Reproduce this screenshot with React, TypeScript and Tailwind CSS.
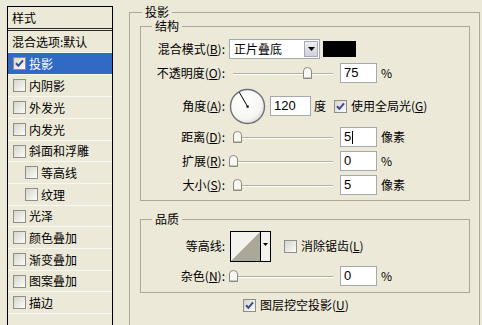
const cjk = "font-['Noto_Sans_CJK_SC',sans-serif]";

const styles = [
  { name: "混合选项:默认", h: "h-[22px]", kind: "plain" },
  { name: "投影", h: "h-[22px]", kind: "main", checked: true, active: true },
  { name: "内阴影", h: "h-[22px]", kind: "main" },
  { name: "外发光", h: "h-[22px]", kind: "main" },
  { name: "内发光", h: "h-[22px]", kind: "main" },
  { name: "斜面和浮雕", h: "h-[21px]", kind: "main" },
  { name: "等高线", h: "h-[22px]", kind: "sub" },
  { name: "纹理", h: "h-[22px]", kind: "sub" },
  { name: "光泽", h: "h-[21px]", kind: "main" },
  { name: "颜色叠加", h: "h-[22px]", kind: "main" },
  { name: "渐变叠加", h: "h-[22px]", kind: "main" },
  { name: "图案叠加", h: "h-[21px]", kind: "main" },
  { name: "描边", h: "h-[22px]", kind: "main" },
];

function Check({ checked = false }: { checked?: boolean }) {
  return (
    <span className="flex h-[13px] w-[13px] shrink-0 items-center justify-center border border-[#8f8f89] bg-gradient-to-br from-[#d6d5cc] to-[#fcfcfa]">
      {checked && (
        <svg width="9" height="9" viewBox="0 0 9 9">
          <path d="M1 4.2 L3.4 6.8 L8 1.4" fill="none" stroke="#3c4c92" strokeWidth="2" />
        </svg>
      )}
    </span>
  );
}

function Slider({ pos }: { pos: number }) {
  return (
    <div className="relative h-[16px] w-[106px] shrink-0">
      <div className="absolute left-[4px] right-[2px] top-[8px] h-[2px] border-t border-b border-t-[#b3b0a2] border-b-white" />
      <svg className="absolute top-[2px]" style={{ left: pos - 4.5 }} width="9" height="12" viewBox="0 0 9 12">
        <path d="M0.5 11.5 L0.5 4 Q0.5 0.5 4.5 0.5 Q8.5 0.5 8.5 4 L8.5 11.5 Z" fill="#f7f7f3" stroke="#8b8a80" />
        <line x1="1" y1="10.5" x2="8" y2="10.5" stroke="#c9c7bb" />
      </svg>
    </div>
  );
}

function Num({ v, w = "w-[37px]", cursor = false }: { v: string; w?: string; cursor?: boolean }) {
  return (
    <div className={`flex h-[20px] ${w} shrink-0 items-center border border-[#a5a9ae] bg-white pl-[3px] font-['Liberation_Sans',sans-serif] text-[13px]`}>
      {v}
      {cursor && <span className="ml-[1px] h-[13px] w-[1px] bg-black" />}
    </div>
  );
}

function Label({ children }: { children: React.ReactNode }) {
  return <div className="w-[84px] shrink-0 text-right">{children}</div>;
}

function SliderRow({ h, label, pos, v, unit, cursor }: { h: string; label: React.ReactNode; pos: number; v: string; unit: string; cursor?: boolean }) {
  return (
    <div className={`flex ${h} items-center`}>
      <Label>{label}</Label>
      <div className="ml-[4px]">
        <Slider pos={pos} />
      </div>
      <div className="ml-[5px]">
        <Num v={v} cursor={cursor} />
      </div>
      <span className="ml-[4px]">{unit}</span>
    </div>
  );
}

export default function App() {
  return (
    <div className={`flex h-[325px] w-[482px] overflow-hidden bg-[#ece9d8] text-[12px] text-black ${cjk}`}>
      {/* style list */}
      <div className="ml-[7px] mt-[6px] h-[330px] w-[106px] shrink-0 border-l border-r border-t border-black">
        <div className="flex h-[24px] items-center border-b-[3px] border-double border-[#2a2a2a] pl-[4px]">样式</div>
        {styles.map((s) => (
          <div
            key={s.name}
            className={`flex ${s.h} items-center gap-[3px] border-b border-[#f8f7f2] ${
              s.kind === "plain" ? "pl-[4px]" : s.kind === "sub" ? "pl-[17px]" : "pl-[5px]"
            } ${s.active ? "bg-[#316ac5] text-white" : ""}`}
          >
            {s.kind !== "plain" && <Check checked={s.checked} />}
            <span>{s.name}</span>
          </div>
        ))}
      </div>

      {/* settings */}
      <div className="flex-1 pl-[16px] pr-[2px]">
        <fieldset className="mt-[6px] h-[340px] border border-[#aca899] pl-[10px] pr-[9px] pt-[2px]">
          <legend className="ml-[2px] px-[3px] leading-[12px]">投影</legend>

          <fieldset className="border border-[#aca899] pb-[4px] pt-[6px]">
            <legend className="ml-[11px] px-[3px] leading-[12px]">结构</legend>

            <div className="flex h-[22px] items-center">
              <Label>
                混合模式(<span className="underline">B</span>):
              </Label>
              <div className="ml-[4px] flex h-[20px] w-[91px] items-center border border-[#a5a9ae] bg-white pl-[4px] pr-[1px]">
                <span className="flex-1">正片叠底</span>
                <span className="flex h-[16px] w-[14px] items-center justify-center border border-[#a9a8b8] bg-gradient-to-b from-[#eeeef4] to-[#cfd0dc]">
                  <svg width="7" height="4" viewBox="0 0 7 4">
                    <path d="M0 0 H7 L3.5 4 Z" fill="#000" />
                  </svg>
                </span>
              </div>
              <div className="ml-[3px] h-[16px] w-[33px] bg-black" />
            </div>

            <SliderRow h="h-[26px]" label={<>不透明度(<span className="underline">O</span>):</>} pos={78} v="75" unit="%" />

            <div className="flex h-[40px] items-center">
              <Label>
                角度(<span className="underline">A</span>):
              </Label>
              <svg className="ml-[4px] shrink-0" width="37" height="37" viewBox="0 0 37 37">
                <defs>
                  <radialGradient id="dial" cx="0.4" cy="0.35" r="0.7">
                    <stop offset="0" stopColor="#ffffff" />
                    <stop offset="0.75" stopColor="#f6f6f2" />
                    <stop offset="1" stopColor="#d9d8d0" />
                  </radialGradient>
                </defs>
                <circle cx="18.5" cy="18.5" r="17" fill="url(#dial)" stroke="#6e7078" strokeWidth="1.4" />
                <line x1="18.5" y1="18.5" x2="10.3" y2="4.3" stroke="#000" strokeWidth="1" />
                <rect x="17.5" y="17.5" width="2.2" height="2.2" fill="#000" />
              </svg>
              <div className="ml-[4px]">
                <Num v="120" w="w-[41px]" />
              </div>
              <span className="ml-[3px]">度</span>
              <div className="ml-[8px] flex items-center gap-[4px]">
                <Check checked />
                <span>
                  使用全局光(<span className="underline">G</span>)
                </span>
              </div>
            </div>

            <SliderRow h="h-[22px]" label={<>距离(<span className="underline">D</span>):</>} pos={8} v="5" unit="像素" cursor />
            <SliderRow h="h-[26px]" label={<>扩展(<span className="underline">R</span>):</>} pos={4} v="0" unit="%" />
            <SliderRow h="h-[22px]" label={<>大小(<span className="underline">S</span>):</>} pos={8} v="5" unit="像素" />
          </fieldset>

          <fieldset className="mt-[12px] border border-[#aca899] pb-[3px] pt-[4px]">
            <legend className="ml-[11px] px-[3px] leading-[12px]">品质</legend>

            <div className="flex h-[34px] items-center">
              <Label>等高线:</Label>
              <div className="ml-[5px] flex h-[31px] w-[41px] shrink-0 border border-black bg-[#f3f2ec]">
                <svg width="29" height="29" viewBox="0 0 29 29">
                  <polygon points="0,29 29,0 29,29" fill="#aca899" />
                </svg>
                <div className="flex flex-1 justify-center border-l border-black pt-[11px]">
                  <svg width="5" height="3" viewBox="0 0 5 3">
                    <path d="M0 0 H5 L2.5 3 Z" fill="#000" />
                  </svg>
                </div>
              </div>
              <div className="ml-[13px] flex items-center gap-[4px]">
                <Check />
                <span>
                  消除锯齿(<span className="underline">L</span>)
                </span>
              </div>
            </div>

            <SliderRow h="h-[26px]" label={<>杂色(<span className="underline">N</span>):</>} pos={4} v="0" unit="%" />
          </fieldset>

          <div className="flex h-[24px] items-center gap-[4px] pl-[103px]">
            <Check checked />
            <span>
              图层挖空投影(<span className="underline">U</span>)
            </span>
          </div>
        </fieldset>
      </div>
    </div>
  );
}
